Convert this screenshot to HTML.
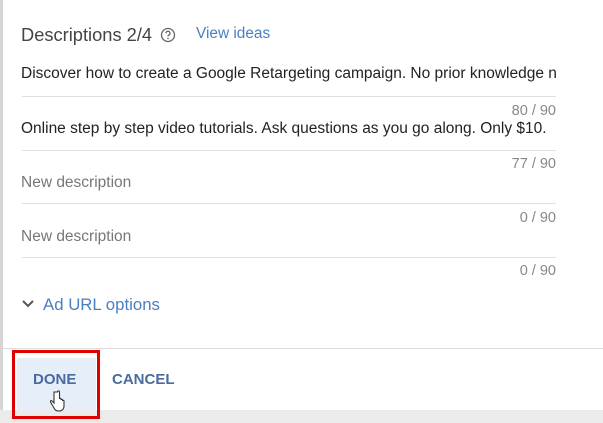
<!DOCTYPE html>
<html><head><style>
body{margin:0;width:603px;height:423px;background:#ebebeb;font-family:"Liberation Sans",sans-serif;position:relative;overflow:hidden}
.card{position:absolute;left:0;top:0;width:603px;height:410px;background:#fff;border-left:3px solid #d6d6d6;box-sizing:border-box}
.t{position:absolute;white-space:nowrap}
.ln{position:absolute;left:19px;width:534px;height:1px;background:#e0e0e0}
.c{position:absolute;right:47px;font-size:14.5px;color:#888}
</style></head><body>
<div class="card">
<div class="t" style="left:18px;top:24px;font-size:18.3px;color:#444">Descriptions 2/4</div>
<svg style="position:absolute;left:157px;top:27px" width="16" height="16" viewBox="0 0 16 16"><circle cx="8" cy="8" r="6.5" fill="none" stroke="#666" stroke-width="1.3"/><path d="M6 6.3a2 2 0 1 1 2.8 1.8c-.6.3-.8.7-.8 1.4" fill="none" stroke="#666" stroke-width="1.3"/><circle cx="8" cy="11.5" r=".8" fill="#666"/></svg>
<div class="t" style="left:193px;top:25px;font-size:15.4px;color:#4a7fc1">View ideas</div>
<div class="t" style="left:18px;top:65px;font-size:15.5px;color:#222;width:536px;overflow:hidden">Discover how to create a Google Retargeting campaign. No prior knowledge needed</div>
<div class="ln" style="top:96px"></div>
<div class="c" style="top:103px">80 / 90</div>
<div class="t" style="left:18px;top:120px;font-size:15.5px;color:#222">Online step by step video tutorials. Ask questions as you go along. Only $10.</div>
<div class="ln" style="top:150px"></div>
<div class="c" style="top:156px">77 / 90</div>
<div class="t" style="left:18px;top:174px;font-size:15.5px;color:#777">New description</div>
<div class="ln" style="top:203px"></div>
<div class="c" style="top:210px">0 / 90</div>
<div class="t" style="left:18px;top:228px;font-size:15.5px;color:#777">New description</div>
<div class="ln" style="top:257px"></div>
<div class="c" style="top:263px">0 / 90</div>
<svg style="position:absolute;left:18px;top:299px" width="14" height="10" viewBox="0 0 14 10"><path d="M2 2l5 5 5-5" fill="none" stroke="#555" stroke-width="2"/></svg>
<div class="t" style="left:40px;top:295px;font-size:16.8px;color:#4a7fc1">Ad URL options</div>
<div style="position:absolute;left:0;top:348px;width:603px;height:1px;background:#ddd"></div>
<div style="position:absolute;left:14px;top:358px;width:79px;height:52px;background:#e6eef9"></div>
<div class="t" style="left:30px;top:371px;font-size:15px;font-weight:bold;color:#4a6aa0">DONE</div>
<div class="t" style="left:109px;top:371px;font-size:15px;font-weight:bold;color:#4a6aa0">CANCEL</div>
<svg style="position:absolute;left:47px;top:390px" width="16" height="22" viewBox="0 0 16 22"><path d="M4 2v11l-2-2c-1-1-2 0-1.5 1L4 18c1 2 2 3 5 3s5-2 5-5v-5c0-1-1.5-1-1.5 0v-1c0-1-1.5-1-1.5 0v-1c0-1-1.5-1-1.5 0V2c0-1.5-2-1.5-2 0z" fill="#fff" stroke="#333" stroke-width="1.1"/></svg>
</div>
<div style="position:absolute;left:12px;top:350px;width:82px;height:63px;border:3px solid #e00000"></div>
</body></html>
